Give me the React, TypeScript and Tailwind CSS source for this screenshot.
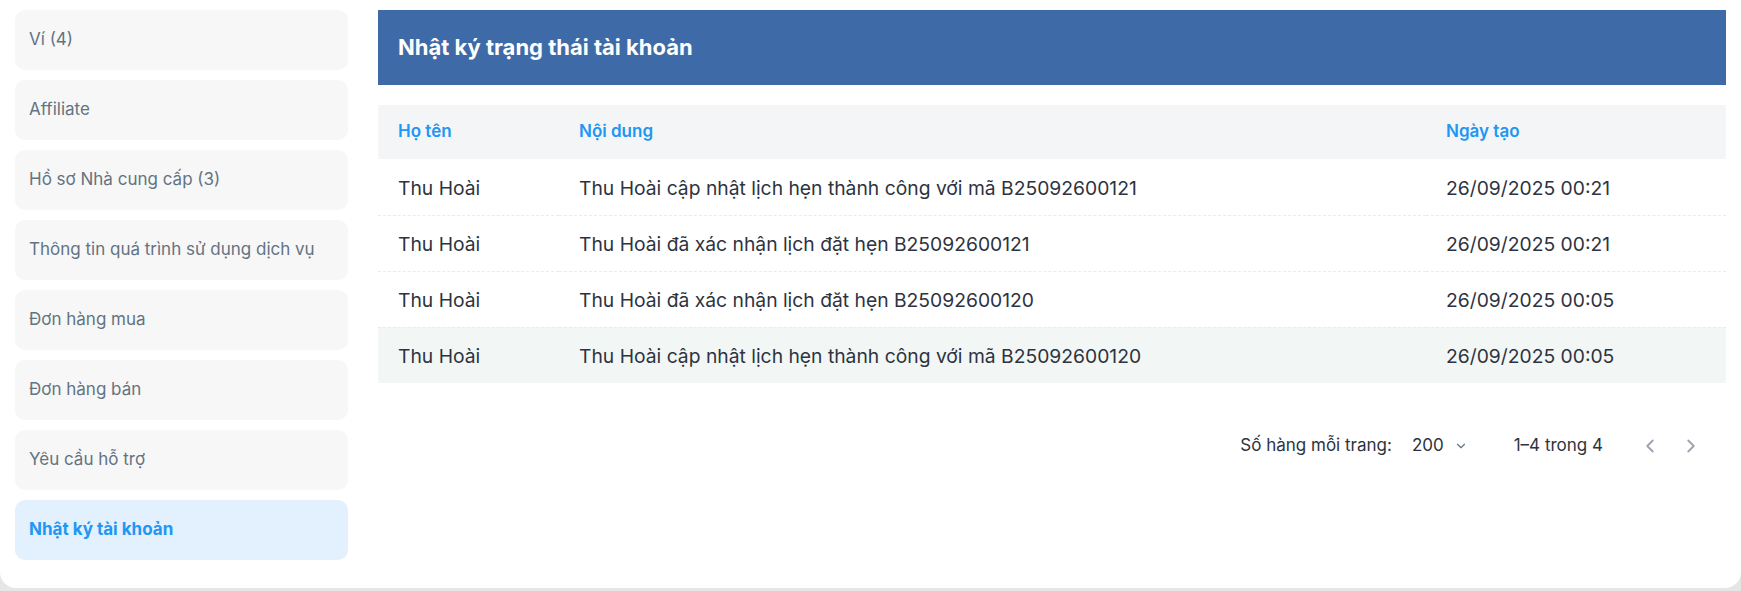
import { ChevronDown, ChevronLeft, ChevronRight } from "lucide-react";

const menu = [
  "Ví (4)",
  "Affiliate",
  "Hồ sơ Nhà cung cấp (3)",
  "Thông tin quá trình sử dụng dịch vụ",
  "Đơn hàng mua",
  "Đơn hàng bán",
  "Yêu cầu hỗ trợ",
  "Nhật ký tài khoản",
];

const rows = [
  { name: "Thu Hoài", content: "Thu Hoài cập nhật lịch hẹn thành công với mã B25092600121", date: "26/09/2025 00:21" },
  { name: "Thu Hoài", content: "Thu Hoài đã xác nhận lịch đặt hẹn B25092600121", date: "26/09/2025 00:21" },
  { name: "Thu Hoài", content: "Thu Hoài đã xác nhận lịch đặt hẹn B25092600120", date: "26/09/2025 00:05" },
  { name: "Thu Hoài", content: "Thu Hoài cập nhật lịch hẹn thành công với mã B25092600120", date: "26/09/2025 00:05" },
];

export default function App() {
  return (
    <div className="min-h-[591px] bg-[#e6e6e6] font-['Inter',sans-serif]">
      <div className="h-[588px] bg-white rounded-b-2xl flex gap-[30px] pl-[15px] pr-[15px] pt-[10px]">
        {/* sidebar */}
        <div className="w-[333px] flex flex-col gap-[10px]">
          {menu.map((m, i) => {
            const active = i === menu.length - 1;
            return (
              <div
                key={m}
                className={
                  active
                    ? "h-[60px] rounded-[10px] bg-[#e3f0fd] flex items-center px-[14px] text-[17px] font-bold text-[#2196f3]"
                    : "h-[60px] rounded-[10px] bg-[#f7f7f7] flex items-center px-[14px] text-[17px] text-[#637381]"
                }
              >
                {m}
              </div>
            );
          })}
        </div>

        {/* main */}
        <div className="flex-1 flex flex-col">
          <div className="h-[75px] bg-[#3e6aa8] flex items-center px-5">
            <h2 className="text-white text-[22px] font-bold">Nhật ký trạng thái tài khoản</h2>
          </div>

          <table className="mt-5 w-full text-left">
            <thead>
              <tr className="h-[54px] bg-[#f4f5f7] text-[#2196f3] text-[17px]">
                <th className="w-[181px] pl-5 font-semibold">Họ tên</th>
                <th className="pl-5 font-semibold">Nội dung</th>
                <th className="w-[300px] pl-5 font-semibold">Ngày tạo</th>
              </tr>
            </thead>
            <tbody className="text-[19.3px] text-[#2d3340]">
              {rows.map((r, i) => (
                <tr
                  key={i}
                  className={
                    i === rows.length - 1
                      ? "h-[56px] bg-[#f2f7f6]"
                      : "h-[56px] border-b border-dashed border-[#ebebeb]"
                  }
                >
                  <td className="pl-5 pt-[3px]">{r.name}</td>
                  <td className="pl-5 pt-[3px]">{r.content}</td>
                  <td className="pl-5 pt-[3px]">{r.date}</td>
                </tr>
              ))}
            </tbody>
          </table>

          <div className="mt-[50px] flex items-center justify-end text-[17px] text-[#2d3340] pr-[24px]">
            <span>Số hàng mỗi trang:</span>
            <span className="ml-5 flex items-center gap-[10px]">
              200 <ChevronDown size={14} className="text-[#637381]" />
            </span>
            <span className="ml-[46px]">1–4 trong 4</span>
            <div className="ml-[36px] flex items-center gap-[19px] text-[#9aa3ae]">
              <ChevronLeft size={22} strokeWidth={2} />
              <ChevronRight size={22} strokeWidth={2} />
            </div>
          </div>
        </div>
      </div>
    </div>
  );
}
